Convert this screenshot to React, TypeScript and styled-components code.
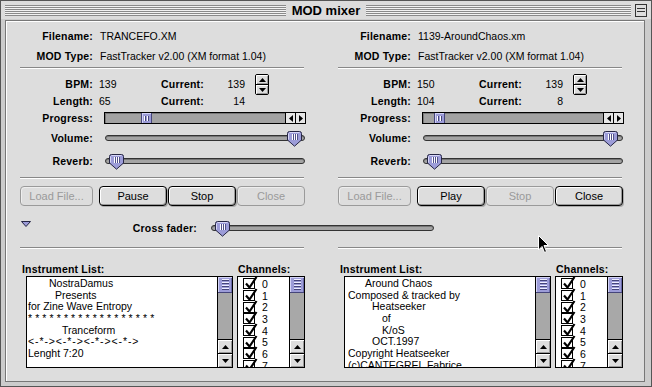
import React from "react";
import styled, { createGlobalStyle } from "styled-components";

const GlobalStyle = createGlobalStyle`
  html, body { margin: 0; padding: 0; background: #cccccc; }
  * { box-sizing: border-box; }
`;

const purple = "#9c9cd8";
const purpleDark = "#45457a";

const Window = styled.div`
  position: relative;
  width: 652px;
  height: 387px;
  background: #cccccc;
  border: 1px solid #555;
  display: flex;
  flex-direction: column;
  font-family: "Liberation Sans", Arial, sans-serif;
  color: #000;
  overflow: hidden;
`;

const TitleBar = styled.div`
  height: 18px;
  display: grid;
  grid-template-columns: 1fr auto 1fr;
  align-items: center;
  padding: 0 4px;
  background: #dcdcdc;
`;

const Stripes = styled.div`
  height: 11px;
  background: repeating-linear-gradient(to bottom, #8a8a8a 0 1px, #f2f2f2 1px 2px);
`;

const TitleRight = styled.div`
  display: flex;
  align-items: center;
  gap: 4px;
`;

const Title = styled.div`
  font-weight: bold;
  font-size: 13px;
  padding: 0 6px;
`;

const CollapseBox = styled.div`
  width: 12px;
  height: 13px;
  border: 1px solid #333;
  background: #ddd;
  display: flex;
  flex-direction: column;
  justify-content: center;
  gap: 2px;
  padding: 0 1px;
  & > span {
    height: 1px;
    background: #333;
  }
`;

const Panel = styled.div`
  flex: 1;
  margin: 1px 6px 4px 4px;
  background: #dddddd;
  border: 1px solid #777;
  box-shadow: inset 1px 1px 0 #fff;
  display: flex;
  flex-direction: column;
  padding: 5px 0 0 14px;
`;

const Columns = styled.div`
  display: grid;
  grid-template-columns: 286px 286px;
  column-gap: 32px;
`;

const Deck = styled.div`
  display: flex;
  flex-direction: column;
`;

const Label = styled.div`
  font-weight: bold;
  font-size: 10.5px;
  letter-spacing: 0.2px;
  text-align: right;
  white-space: nowrap;
`;

const Value = styled.div`
  font-size: 10.5px;
  white-space: nowrap;
`;

const InfoRow = styled.div`
  height: 20px;
  display: grid;
  grid-template-columns: 73px 1fr;
  column-gap: 7px;
  align-items: center;
`;

const Divider = styled.div<{ $top: number }>`
  height: 2px;
  margin: ${(p) => p.$top}px 2px 0 0;
  border-top: 1px solid #888;
  border-bottom: 1px solid #fff;
`;

const StatsBlock = styled.div`
  display: flex;
  align-items: flex-start;
  margin-top: 6px;
`;

const StatsGrid = styled.div`
  display: grid;
  grid-template-columns: 73px 68px 48px 36px;
  grid-auto-rows: 17px;
  align-items: center;
`;

const StatValue = styled(Value)<{ $right?: boolean }>`
  padding-left: ${(p) => (p.$right ? 0 : 6)}px;
  text-align: ${(p) => (p.$right ? "right" : "left")};
`;

const LeftLabel = styled(Label)`
  text-align: left;
`;

const Stepper = styled.div`
  width: 14px;
  height: 21px;
  margin: -1px 0 0 10px;
  border: 1px solid #000;
  border-radius: 2px;
  background: #dddddd;
  display: flex;
  flex-direction: column;
  overflow: hidden;
`;

const StepHalf = styled.div`
  flex: 1;
  display: flex;
  align-items: center;
  justify-content: center;
  box-shadow: inset 1px 1px 0 #fff, inset -1px -1px 0 #999;
  & + & {
    border-top: 1px solid #000;
  }
`;

const ControlRow = styled.div<{ $h: number }>`
  height: ${(p) => p.$h}px;
  display: grid;
  grid-template-columns: 73px 1fr;
  align-items: center;
`;

const ProgressTrack = styled.div`
  position: relative;
  margin-left: 11px;
  width: 202px;
  height: 12px;
  border: 1px solid #000;
  background: #a2a2a2;
  box-shadow: inset 1px 1px 0 #777;
  display: flex;
  justify-content: flex-end;
`;

const ProgressThumb = styled.div<{ $x: number }>`
  position: absolute;
  left: ${(p) => p.$x}px;
  top: 0;
  width: 11px;
  height: 10px;
  background: ${purple};
  border-left: 1px solid ${purpleDark};
  border-right: 1px solid ${purpleDark};
  box-shadow: inset 1px 1px 0 #d0d0f4;
  display: flex;
  align-items: center;
  justify-content: center;
  gap: 1px;
  & > span {
    width: 1px;
    height: 5px;
    background: #fff;
    box-shadow: 1px 0 0 ${purpleDark};
    margin-right: 1px;
  }
`;

const ArrowBox = styled.div`
  width: 10px;
  height: 10px;
  border-left: 1px solid #000;
  background: #e6e6e6;
  display: flex;
  align-items: center;
  justify-content: center;
`;

const SliderTrack = styled.div<{ $w: number; $ml: number }>`
  position: relative;
  margin-left: ${(p) => p.$ml}px;
  width: ${(p) => p.$w}px;
  height: 6px;
  border: 1px solid #333;
  border-radius: 3px;
  background: #a4a4a4;
  box-shadow: inset 0 1px 0 #777;
`;

const SliderKnob = styled.div<{ $x: number }>`
  position: absolute;
  left: ${(p) => p.$x}px;
  top: -5px;
  width: 15px;
  height: 16px;
  line-height: 0;
`;

const ButtonRow = styled.div`
  display: flex;
  gap: 1px;
  margin-top: 7px;
`;

const Button = styled.div<{ $disabled?: boolean; $w: number }>`
  width: ${(p) => p.$w}px;
  height: 20px;
  display: flex;
  align-items: center;
  justify-content: center;
  font-size: 11px;
  border-radius: 4px;
  background: #dddddd;
  color: ${(p) => (p.$disabled ? "#9a9a9a" : "#000")};
  border: 1px solid ${(p) => (p.$disabled ? "#9a9a9a" : "#000")};
  box-shadow: ${(p) =>
    p.$disabled
      ? "inset 1px 1px 0 #eee"
      : "inset 1px 1px 0 #fff, inset -1px -1px 0 #999, 1px 1px 0 #aaa"};
  &:first-child {
    margin-right: 5px;
  }
`;

const CrossRow = styled.div`
  height: 28px;
  margin-top: 8px;
  display: flex;
  align-items: center;
`;

const Disclosure = styled.div`
  align-self: flex-start;
  margin: 7px 0 0 1px;
  width: 96px;
  line-height: 0;
`;

const CrossLabel = styled(Label)`
  width: 80px;
`;

const ListHeader = styled.div`
  height: 14px;
  display: flex;
  align-items: center;
`;

const InstrumentPanel = styled.div`
  display: grid;
  grid-template-columns: 207px 68px;
  column-gap: 4px;
  padding-left: 6px;
  margin-top: 13px;
`;

const InstLabel = styled(LeftLabel)`
  margin-left: -4px;
`;

const ChanLabel = styled(LeftLabel)`
  margin-left: 1px;
`;

const ListBox = styled.div`
  height: 92px;
  border: 1px solid #000;
  background: #fff;
  display: flex;
  overflow: hidden;
`;

const ListBody = styled.div`
  flex: 1;
  padding: 1px 0 0 1px;
  overflow: hidden;
`;

const ListLine = styled.div<{ $indent: number; $spacing?: number }>`
  height: 11.7px;
  line-height: 11.7px;
  font-size: 10.5px;
  padding-left: ${(p) => p.$indent}px;
  letter-spacing: ${(p) => p.$spacing ?? 0}px;
  white-space: nowrap;
`;

const ChanLine = styled.div`
  height: 11.7px;
  display: flex;
  align-items: center;
  gap: 7px;
  padding-left: 4px;
  font-size: 10.5px;
`;

const CheckBox = styled.div`
  width: 12px;
  height: 11px;
  border: 1px solid #000;
  position: relative;
  & > svg {
    position: absolute;
    left: 0;
    top: -3px;
  }
`;

const ScrollBar = styled.div`
  width: 15px;
  border-left: 1px solid #000;
  background: #a8a8a8;
  display: flex;
  flex-direction: column;
`;

const ScrollThumb = styled.div`
  height: 16px;
  background: ${purple};
  border-bottom: 1px solid ${purpleDark};
  box-shadow: inset 1px 1px 0 #d4d4f6, inset -1px 0 0 #6a6aa8;
  display: flex;
  flex-direction: column;
  align-items: center;
  justify-content: center;
  gap: 1px;
  & > span {
    width: 7px;
    height: 1px;
    background: #eef;
    box-shadow: 0 1px 0 ${purpleDark};
    margin-bottom: 1px;
  }
`;

const ScrollGap = styled.div`
  flex: 1;
`;

const ScrollArrow = styled.div`
  height: 14px;
  border-top: 1px solid #000;
  background: #dddddd;
  box-shadow: inset 1px 1px 0 #fff, inset -1px -1px 0 #999;
  display: flex;
  align-items: center;
  justify-content: center;
`;

const Cursor = styled.div`
  position: absolute;
  left: 537px;
  top: 234px;
  line-height: 0;
`;

const Tri = ({ dir, w = 7, h = 4 }: { dir: "up" | "down" | "left" | "right"; w?: number; h?: number }) => {
  const pts =
    dir === "up"
      ? `0,${h} ${w / 2},0 ${w},${h}`
      : dir === "down"
      ? `0,0 ${w},0 ${w / 2},${h}`
      : dir === "left"
      ? `${w},0 ${w},${h} 0,${h / 2}`
      : `0,0 0,${h} ${w},${h / 2}`;
  return (
    <svg width={w} height={h} viewBox={`0 0 ${w} ${h}`}>
      <polygon points={pts} fill="#000" />
    </svg>
  );
};

const Knob = () => (
  <svg width="15" height="16" viewBox="0 0 15 16">
    <path
      d="M2.5 0.5 H12.5 Q14.5 0.5 14.5 2.5 V9 L7.5 15.2 L0.5 9 V2.5 Q0.5 0.5 2.5 0.5 Z"
      fill={purple}
      stroke="#262645"
    />
    <path d="M1.5 2.5 V8.5 M2.5 1.5 H12.5" stroke="#d6d6f6" />
    {[5, 7, 9].map((x) => (
      <g key={x}>
        <line x1={x + 0.5} y1="3" x2={x + 0.5} y2="9" stroke="#ffffff" />
        <line x1={x + 1.5} y1="3" x2={x + 1.5} y2="9" stroke="#50508a" />
      </g>
    ))}
  </svg>
);

const Slider = ({ w, ml, value }: { w: number; ml: number; value: number }) => (
  <SliderTrack $w={w} $ml={ml}>
    <SliderKnob $x={1 + value * (w - 20)}>
      <Knob />
    </SliderKnob>
  </SliderTrack>
);

const Check = () => (
  <svg width="14" height="14" viewBox="0 0 14 14">
    <path d="M2 7.5 L5.5 11.5 L12.5 1" fill="none" stroke="#000" strokeWidth="2.2" />
  </svg>
);

const ScrollBarV = () => (
  <ScrollBar>
    <ScrollThumb>
      <span />
      <span />
      <span />
      <span />
    </ScrollThumb>
    <ScrollGap />
    <ScrollArrow>
      <Tri dir="up" />
    </ScrollArrow>
    <ScrollArrow>
      <Tri dir="down" />
    </ScrollArrow>
  </ScrollBar>
);

type DeckData = {
  file: string;
  bpm: string;
  length: string;
  cur1: string;
  cur2: string;
  progress: number;
  volume: number;
  reverb: number;
  buttons: { label: string; disabled?: boolean }[];
};

const decks: DeckData[] = [
  {
    file: "TRANCEFO.XM",
    bpm: "139",
    length: "65",
    cur1: "139",
    cur2: "14",
    progress: 36,
    volume: 1,
    reverb: 0.01,
    buttons: [
      { label: "Load File...", disabled: true },
      { label: "Pause" },
      { label: "Stop" },
      { label: "Close", disabled: true },
    ],
  },
  {
    file: "1139-AroundChaos.xm",
    bpm: "150",
    length: "104",
    cur1: "139",
    cur2: "8",
    progress: 11,
    volume: 0.99,
    reverb: 0.01,
    buttons: [
      { label: "Load File...", disabled: true },
      { label: "Play" },
      { label: "Stop", disabled: true },
      { label: "Close" },
    ],
  },
];

const lists: { text: string; indent: number; spacing?: number }[][] = [
  [
    { text: "NostraDamus", indent: 21 },
    { text: "Presents", indent: 27 },
    { text: "for Zine Wave Entropy", indent: 0 },
    { text: "******************", indent: 0, spacing: 3.1 },
    { text: "Tranceform", indent: 34 },
    { text: "<-*-><-*-><-*-><-*->", indent: 0, spacing: 0.9 },
    { text: "Lenght 7:20", indent: 0 },
  ],
  [
    { text: "Around Chaos", indent: 19 },
    { text: "Composed & tracked by", indent: 2 },
    { text: "Heatseeker", indent: 26 },
    { text: "of", indent: 36 },
    { text: "K/oS", indent: 36 },
    { text: "OCT.1997", indent: 26 },
    { text: "Copyright Heatseeker", indent: 2 },
    { text: "(c)CANTEGREL Fabrice", indent: 2 },
  ],
];

const DeckView = ({ d }: { d: DeckData }) => (
  <Deck>
    <InfoRow>
      <Label>Filename:</Label>
      <Value>{d.file}</Value>
    </InfoRow>
    <InfoRow>
      <Label>MOD Type:</Label>
      <Value>FastTracker v2.00 (XM format 1.04)</Value>
    </InfoRow>
    <Divider $top={1} />
    <StatsBlock>
      <StatsGrid>
        <Label>BPM:</Label>
        <StatValue>{d.bpm}</StatValue>
        <LeftLabel>Current:</LeftLabel>
        <StatValue $right>{d.cur1}</StatValue>
        <Label>Length:</Label>
        <StatValue>{d.length}</StatValue>
        <LeftLabel>Current:</LeftLabel>
        <StatValue $right>{d.cur2}</StatValue>
      </StatsGrid>
      <Stepper>
        <StepHalf>
          <Tri dir="up" />
        </StepHalf>
        <StepHalf>
          <Tri dir="down" />
        </StepHalf>
      </Stepper>
    </StatsBlock>
    <ControlRow $h={18}>
      <Label>Progress:</Label>
      <ProgressTrack>
        <ProgressThumb $x={d.progress}>
          <span />
          <span />
        </ProgressThumb>
        <ArrowBox>
          <Tri dir="left" w={4} h={7} />
        </ArrowBox>
        <ArrowBox>
          <Tri dir="right" w={4} h={7} />
        </ArrowBox>
      </ProgressTrack>
    </ControlRow>
    <ControlRow $h={22}>
      <Label>Volume:</Label>
      <Slider w={200} ml={12} value={d.volume} />
    </ControlRow>
    <ControlRow $h={23}>
      <Label>Reverb:</Label>
      <Slider w={200} ml={12} value={d.reverb} />
    </ControlRow>
    <Divider $top={5} />
    <ButtonRow>
      {d.buttons.map((b, i) => (
        <Button key={b.label} $w={i === 0 ? 73 : 68} $disabled={b.disabled}>
          {b.label}
        </Button>
      ))}
    </ButtonRow>
  </Deck>
);

const ListView = ({ lines }: { lines: { text: string; indent: number; spacing?: number }[] }) => (
  <InstrumentPanel>
    <ListHeader>
      <InstLabel>Instrument List:</InstLabel>
    </ListHeader>
    <ListHeader>
      <ChanLabel>Channels:</ChanLabel>
    </ListHeader>
    <ListBox>
      <ListBody>
        {lines.map((l, i) => (
          <ListLine key={i} $indent={l.indent} $spacing={l.spacing}>
            {l.text}
          </ListLine>
        ))}
      </ListBody>
      <ScrollBarV />
    </ListBox>
    <ListBox>
      <ListBody>
        {[0, 1, 2, 3, 4, 5, 6, 7].map((n) => (
          <ChanLine key={n}>
            <CheckBox>
              <Check />
            </CheckBox>
            {n}
          </ChanLine>
        ))}
      </ListBody>
      <ScrollBarV />
    </ListBox>
  </InstrumentPanel>
);

export default function App() {
  return (
    <>
      <GlobalStyle />
      <Window>
        <TitleBar>
          <Stripes />
          <Title>MOD mixer</Title>
          <TitleRight>
            <Stripes style={{ flex: 1 }} />
            <CollapseBox>
              <span />
              <span />
            </CollapseBox>
          </TitleRight>
        </TitleBar>
        <Panel>
          <Columns>
            {decks.map((d) => (
              <DeckView key={d.file} d={d} />
            ))}
          </Columns>
          <CrossRow>
            <Disclosure>
              <svg width="10" height="6" viewBox="0 0 10 6">
                <polygon points="0.5,0.5 9.5,0.5 5,5.5" fill={purple} stroke="#262645" />
              </svg>
            </Disclosure>
            <CrossLabel>Cross fader:</CrossLabel>
            <Slider w={223} ml={14} value={0.01} />
          </CrossRow>
          <Columns>
            <Divider $top={5} />
            <Divider $top={5} />
          </Columns>
          <Columns>
            {lists.map((l, i) => (
              <ListView key={i} lines={l} />
            ))}
          </Columns>
        </Panel>
        <Cursor>
          <svg width="12" height="19" viewBox="0 0 12 19">
            <path
              d="M0.5 0.5 L0.5 15 L4 11.5 L6.5 17.5 L8.5 16.5 L6 10.5 L10.5 10.5 Z"
              fill="#000"
              stroke="#fff"
            />
          </svg>
        </Cursor>
      </Window>
    </>
  );
}
